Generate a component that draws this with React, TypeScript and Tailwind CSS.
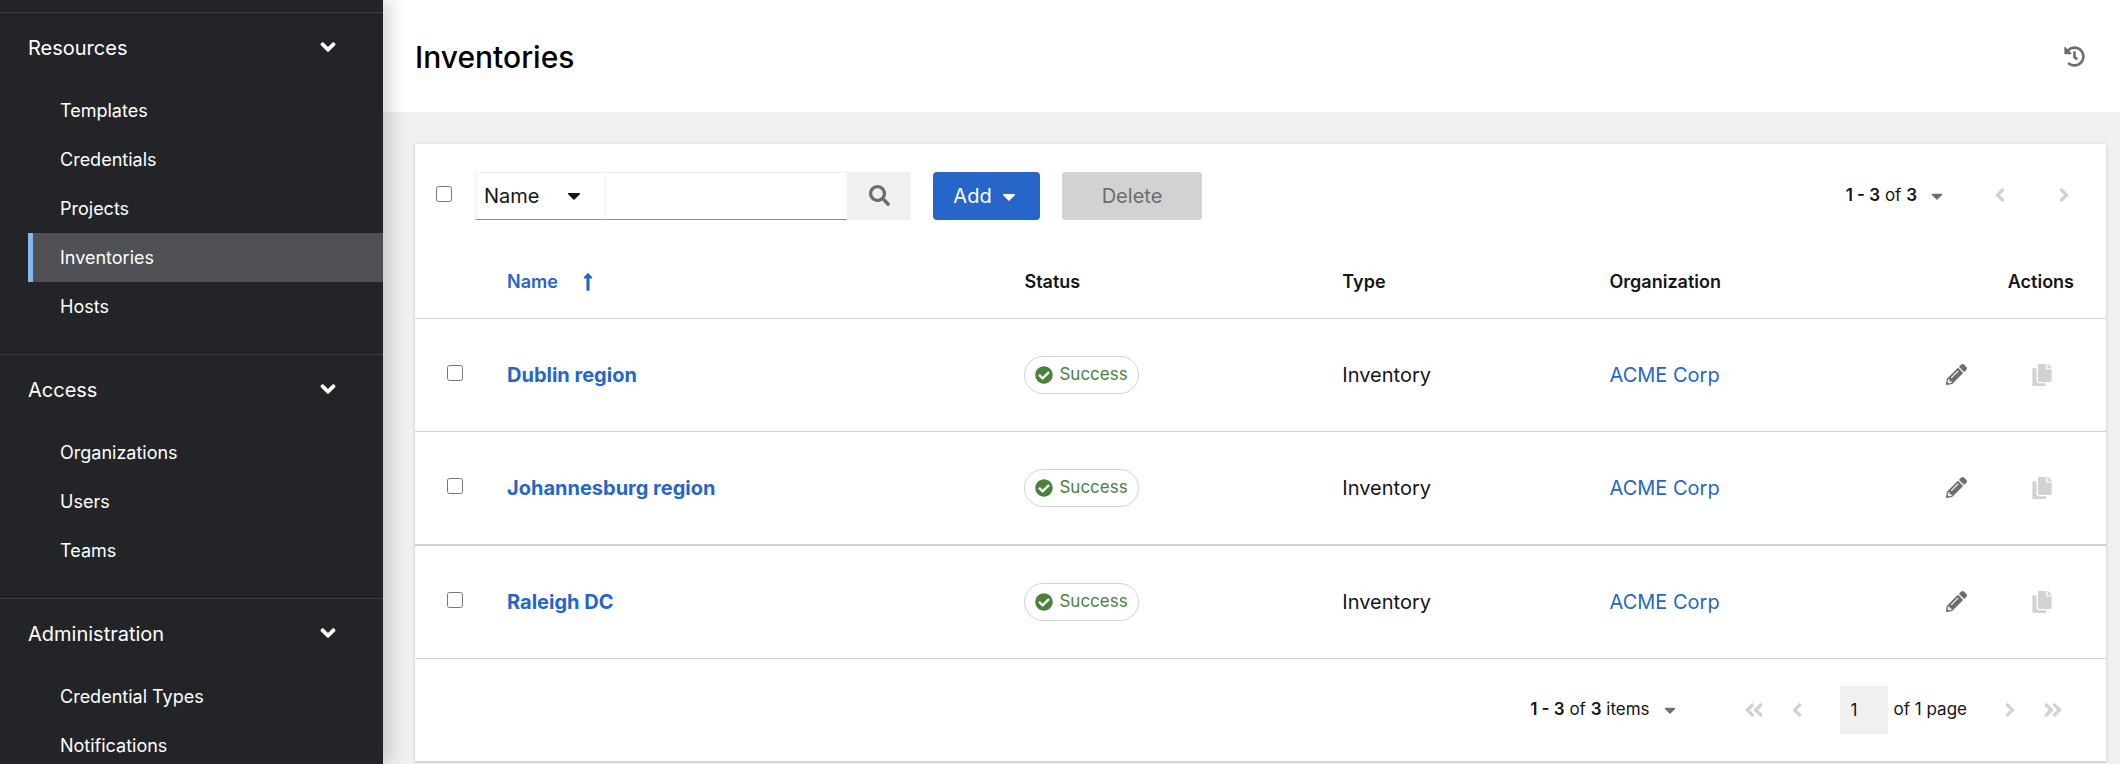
import {
  FaAngleDoubleLeft,
  FaAngleDoubleRight,
  FaAngleDown,
  FaAngleLeft,
  FaAngleRight,
  FaCaretDown,
  FaCheckCircle,
  FaCopy,
  FaHistory,
  FaLongArrowAltUp,
  FaPencilAlt,
  FaSearch,
} from "react-icons/fa";

type Section = { title: string; items: string[] };

const sections: Section[] = [
  { title: "Resources", items: ["Templates", "Credentials", "Projects", "Inventories", "Hosts"] },
  { title: "Access", items: ["Organizations", "Users", "Teams"] },
  { title: "Administration", items: ["Credential Types", "Notifications"] },
];

const inventories = ["Dublin region", "Johannesburg region", "Raleigh DC"];

function Sidebar() {
  return (
    <nav
      aria-label="Global"
      className="relative z-10 w-[383px] shrink-0 overflow-hidden bg-[#222428] pt-3 text-white shadow-[8px_0_16px_rgba(3,3,3,0.16)]"
    >
      {sections.map((section) => (
        <section key={section.title} className="border-t border-[#3c3f42] pb-[23px]">
          <button
            type="button"
            aria-expanded="true"
            className="flex h-[73px] w-full items-center justify-between pr-[43px] pb-1 pl-7 text-left text-[20px]"
          >
            <span>{section.title}</span>
            <FaAngleDown className="mb-[2px] h-6 w-6" aria-hidden="true" />
          </button>
          <ul>
            {section.items.map((item) => {
              const current = item === "Inventories";
              return (
                <li key={item} className="pl-7">
                  <a
                    href="#"
                    aria-current={current ? "page" : undefined}
                    className={
                      current
                        ? "flex h-[49px] items-center border-l-[5px] border-[#84b9ef] bg-[#505155] pl-[27px] text-[18px]"
                        : "flex h-[49px] items-center pl-8 text-[18px]"
                    }
                  >
                    {item}
                  </a>
                </li>
              );
            })}
          </ul>
        </section>
      ))}
    </nav>
  );
}

function Toolbar() {
  return (
    <div className="flex items-center pt-7 pr-[10px] pl-[21px]">
      <input type="checkbox" aria-label="Select all" className="mr-[23px] mb-1 h-4 w-4" />
      <div className="flex h-12">
        <div className="relative w-[131px] border border-[#f0f0f0] border-b-[#8a8d90]">
          <select
            aria-label="Search field"
            className="h-full w-full appearance-none bg-transparent pl-2 text-[20px]"
          >
            <option>Name</option>
          </select>
          <FaCaretDown
            className="pointer-events-none absolute top-3 right-6 h-[21px] w-[14px]"
            aria-hidden="true"
          />
        </div>
        <input
          type="text"
          aria-label="Search text"
          className="w-[241px] border-t border-b border-t-[#f0f0f0] border-b-[#8a8d90] px-3 text-[20px]"
        />
        <button
          type="button"
          aria-label="Search"
          className="flex w-16 items-center justify-center bg-[#f0f0f0] pb-[2px] text-[#6a6e73]"
        >
          <FaSearch className="h-[21px] w-[21px]" />
        </button>
      </div>
      <button
        type="button"
        className="ml-[22px] flex h-12 w-[107px] items-center justify-center gap-[10px] rounded bg-[#2566c8] pr-1 text-[20px] text-white"
      >
        Add
        <FaCaretDown className="h-[21px] w-[14px]" aria-hidden="true" />
      </button>
      <button
        type="button"
        disabled
        className="ml-[22px] h-12 w-[140px] rounded bg-[#d2d2d2] text-[20px] text-[#6a6e73]"
      >
        Delete
      </button>
      <div className="ml-auto flex items-center">
        <button type="button" className="flex items-center gap-[14px] text-[17px]">
          <span>
            <b className="font-semibold">1 - 3</b> of <b className="font-semibold">3</b>
          </span>
          <FaCaretDown className="h-[18px] w-3 text-[#6a6e73]" aria-hidden="true" />
        </button>
        <button
          type="button"
          disabled
          aria-label="Previous page"
          className="ml-[25px] flex h-12 w-16 items-center justify-center pb-[2px] text-[#d2d2d2]"
        >
          <FaAngleLeft className="h-[22px] w-[22px]" />
        </button>
        <button
          type="button"
          disabled
          aria-label="Next page"
          className="flex h-12 w-16 items-center justify-center pb-[2px] text-[#d2d2d2]"
        >
          <FaAngleRight className="h-[22px] w-[22px]" />
        </button>
      </div>
    </div>
  );
}

function InventoryTable() {
  return (
    <table className="w-full table-fixed text-left">
      <colgroup>
        <col className="w-[92px]" />
        <col className="w-[30.6%]" />
        <col className="w-[18.8%]" />
        <col className="w-[15.8%]" />
        <col className="w-[14%]" />
        <col />
      </colgroup>
      <thead>
        <tr className="h-[98px] border-b border-[#d2d2d2] text-[18px]">
          <td />
          <th scope="col" aria-sort="ascending" className="pt-[26px] font-semibold text-[#2566c8]">
            <button type="button" className="flex items-center gap-5">
              Name
              <FaLongArrowAltUp className="h-5 w-5" aria-hidden="true" />
            </button>
          </th>
          <th scope="col" className="pt-[26px] font-semibold">Status</th>
          <th scope="col" className="pt-[26px] font-semibold">Type</th>
          <th scope="col" className="pt-[26px] font-semibold">Organization</th>
          <th scope="col" className="pt-[26px] pr-8 text-right font-semibold">Actions</th>
        </tr>
      </thead>
      <tbody className="text-[20px]">
        {inventories.map((name, index) => (
          <tr
            key={name}
            className={
              index === 1
                ? "h-[114px] border-b-2 border-[#d2d2d2]"
                : "h-[113px] border-b border-[#d2d2d2]"
            }
          >
            <td className="pb-1 pl-8">
              <input type="checkbox" aria-label={`Select ${name}`} className="block h-4 w-4" />
            </td>
            <td>
              <a href="#" className="font-bold text-[#2566c8]">{name}</a>
            </td>
            <td>
              <span className="inline-flex h-[38px] items-center gap-[6px] rounded-[20px] border border-[#d2d2d2] px-[10px] align-middle text-[17px] text-[#4a823c]">
                <FaCheckCircle className="h-[18px] w-[18px]" aria-hidden="true" />
                Success
              </span>
            </td>
            <td>Inventory</td>
            <td>
              <a href="#" className="text-[#2566c8]">ACME Corp</a>
            </td>
            <td className="pr-8">
              <div className="flex justify-end gap-[22px]">
                <button
                  type="button"
                  aria-label={`Edit ${name}`}
                  className="flex h-12 w-16 items-center justify-center text-[#6a6e73]"
                >
                  <FaPencilAlt className="h-[21px] w-[21px]" />
                </button>
                <button
                  type="button"
                  disabled
                  aria-label={`Copy ${name}`}
                  className="flex h-12 w-16 items-center justify-center text-[#d2d2d2]"
                >
                  <FaCopy className="h-[22px] w-[22px]" />
                </button>
              </div>
            </td>
          </tr>
        ))}
      </tbody>
    </table>
  );
}

function Pagination() {
  return (
    <div className="flex h-[102px] items-center justify-end pr-8 text-[17px]">
      <button type="button" className="flex items-center gap-[14px]">
        <span>
          <b className="font-semibold">1 - 3</b> of <b className="font-semibold">3</b> items
        </span>
        <FaCaretDown className="h-[18px] w-3 text-[#6a6e73]" aria-hidden="true" />
      </button>
      <div className="ml-[57px] flex items-center text-[#d2d2d2]">
        <button type="button" disabled aria-label="First page" className="flex w-[43px] justify-center">
          <FaAngleDoubleLeft className="h-[22px] w-[22px]" />
        </button>
        <button type="button" disabled aria-label="Previous page" className="flex w-[43px] justify-center">
          <FaAngleLeft className="h-[22px] w-[22px]" />
        </button>
      </div>
      <label className="ml-[21px] flex items-center gap-[6px]">
        <input
          type="text"
          defaultValue="1"
          aria-label="Current page"
          className="h-12 w-12 bg-[#f0f0f0] pl-[11px]"
        />
        <span>of 1 page</span>
      </label>
      <div className="ml-[21px] flex items-center text-[#d2d2d2]">
        <button type="button" disabled aria-label="Next page" className="flex w-[43px] justify-center">
          <FaAngleRight className="h-[22px] w-[22px]" />
        </button>
        <button type="button" disabled aria-label="Last page" className="flex w-[43px] justify-center">
          <FaAngleDoubleRight className="h-[22px] w-[22px]" />
        </button>
      </div>
    </div>
  );
}

export default function App() {
  return (
    <div className="flex h-screen overflow-hidden bg-[#f0f0f0] font-['Inter',sans-serif] text-[#151515]">
      <Sidebar />
      <main className="min-w-0 flex-1">
        <header className="flex h-28 items-center justify-between bg-white pr-[35px] pl-8">
          <h1 className="pt-[2px] text-[30px] font-medium text-black">Inventories</h1>
          <button type="button" aria-label="Activity stream" className="text-[#6a6e73]">
            <FaHistory className="h-[21px] w-[21px]" />
          </button>
        </header>
        <div className="pt-8 pr-[14px] pl-8">
          <div className="bg-white shadow-[0_1px_3px_rgba(3,3,3,0.2)]">
            <Toolbar />
            <InventoryTable />
            <Pagination />
          </div>
        </div>
      </main>
    </div>
  );
}
